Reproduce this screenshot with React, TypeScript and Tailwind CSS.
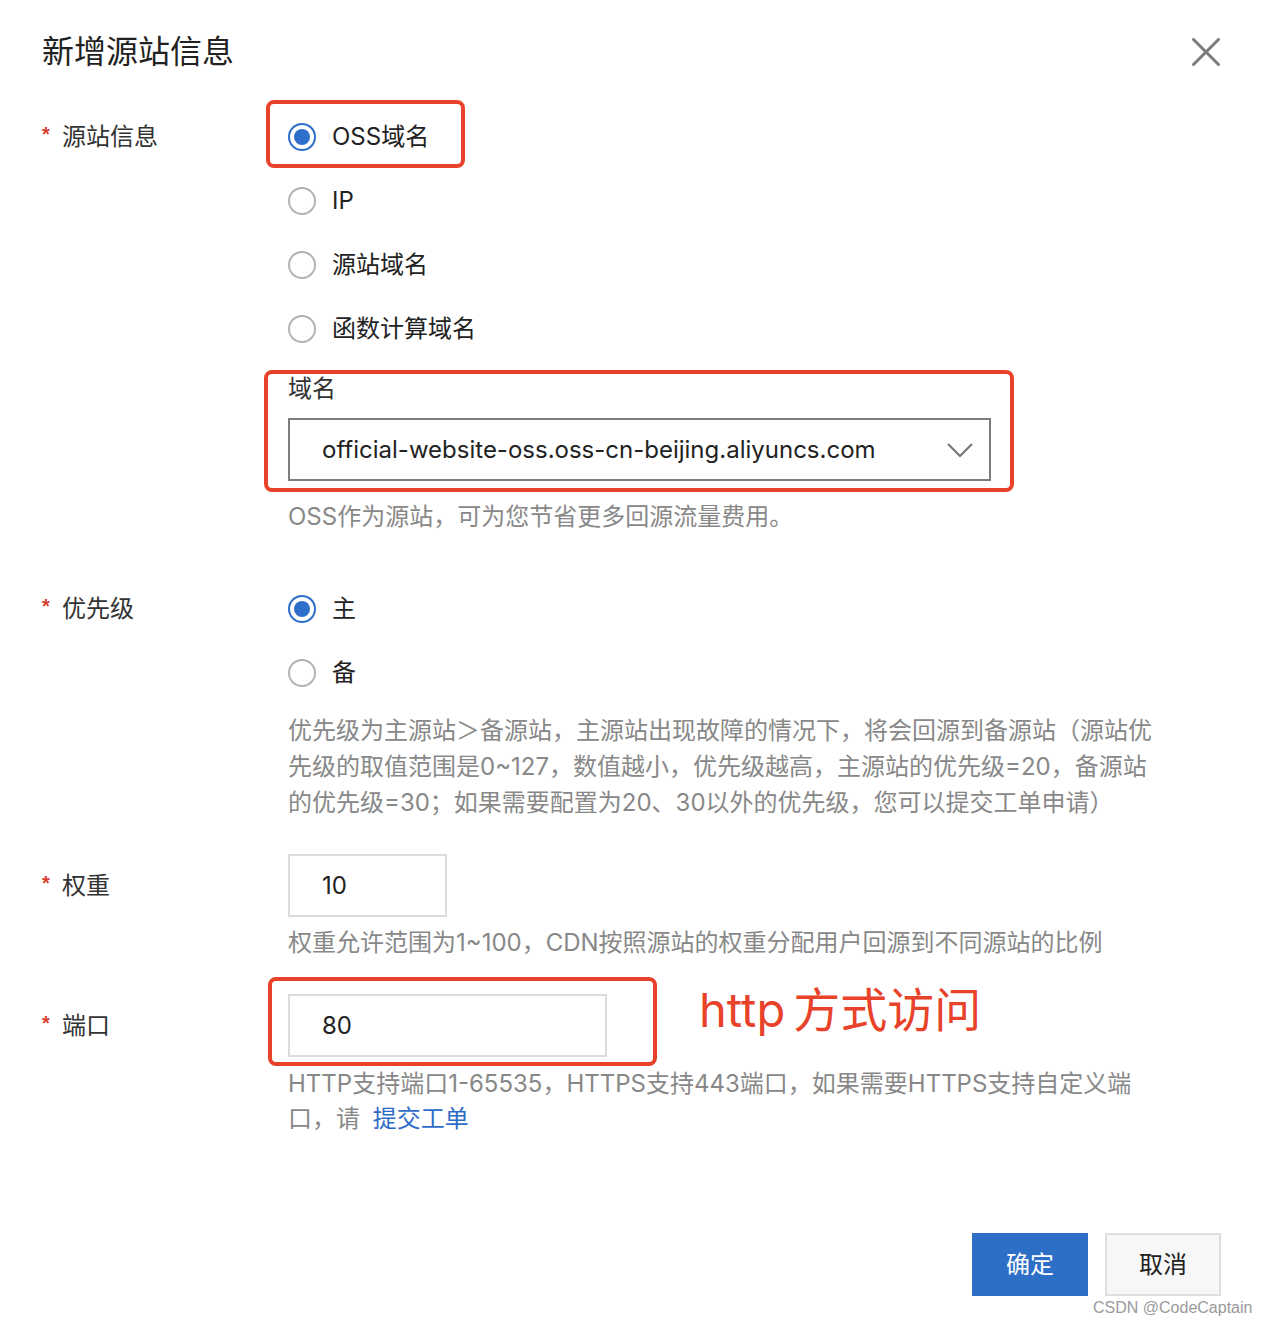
import React from "react";

const FONT = 'Inter, "Noto Sans CJK SC", sans-serif';

function Radio({ checked, label }: { checked?: boolean; label: string }) {
  return (
    <div className="flex items-center h-[64px]">
      {checked ? (
        <span className="w-[28px] h-[28px] rounded-full border-[2px] border-[#2e6fcc] flex items-center justify-center">
          <span className="w-[16px] h-[16px] rounded-full bg-[#2e6fcc]" />
        </span>
      ) : (
        <span className="w-[28px] h-[28px] rounded-full border-[2px] border-[#b3b3b3]" />
      )}
      <span className="ml-[16px] text-[24px] leading-[36px] text-[#222]">{label}</span>
    </div>
  );
}

function Label({ text, h }: { text: string; h: string }) {
  return (
    <div className={`w-[246px] shrink-0 flex items-center ${h}`}>
      <span className="text-[#d9402b] text-[20px] font-bold w-[20px] mt-[-6px]" style={{ fontFamily: '"Liberation Sans", sans-serif' }}>*</span>
      <span className="text-[24px] leading-[36px] text-[#333]">{text}</span>
    </div>
  );
}

export default function App() {
  return (
    <div className="w-[1264px] h-[1326px] bg-white relative" style={{ fontFamily: FONT }}>
      <div className="flex items-center justify-between pl-[42px] pr-[44px] h-[100px] pt-[3px]">
        <span className="text-[32px] leading-[44px] text-[#222]">新增源站信息</span>
        <svg width="28" height="28" viewBox="0 0 28 28" stroke="#7a7a7a" strokeWidth="3" strokeLinecap="round">
          <line x1="1.5" y1="1.5" x2="26.5" y2="26.5" />
          <line x1="26.5" y1="1.5" x2="1.5" y2="26.5" />
        </svg>
      </div>

      <div className="pl-[42px] pt-[5px]">
        {/* Row 1 */}
        <div className="flex">
          <Label text="源站信息" h="h-[64px]" />
          <div className="flex flex-col">
            <div className="relative">
              <div className="absolute left-[-22px] top-[-5px] w-[199px] h-[68px] border-[4px] border-[#e8432a] rounded-[8px]" />
              <Radio checked label="OSS域名" />
            </div>
            <Radio label="IP" />
            <Radio label="源站域名" />
            <Radio label="函数计算域名" />
            <div className="relative mt-[10px]">
              <div className="absolute left-[-24px] top-[-1px] w-[750px] h-[122px] border-[4px] border-[#e8432a] rounded-[8px]" />
              <div className="text-[24px] leading-[36px] text-[#333]">域名</div>
              <div className="mt-[11px] w-[703px] h-[63px] border-[2px] border-[#7d7d7d] flex items-center justify-between pl-[32px] pr-[16px]">
                <span className="text-[24px] leading-[36px] text-[#222]">official-website-oss.oss-cn-beijing.aliyuncs.com</span>
                <svg width="26" height="16" viewBox="0 0 26 16" fill="none" stroke="#777" strokeWidth="2.2">
                  <polyline points="1,2 13,14 25,2" />
                </svg>
              </div>
            </div>
            <div className="mt-[18px] text-[24px] leading-[36px] text-[#888]">OSS作为源站，可为您节省更多回源流量费用。</div>
          </div>
        </div>

        {/* Row 2 */}
        <div className="flex mt-[42px]">
          <Label text="优先级" h="h-[64px]" />
          <div className="flex flex-col">
            <Radio checked label="主" />
            <Radio label="备" />
            <div className="mt-[8px] text-[24px] leading-[36px] text-[#888] whitespace-nowrap">
              <div>优先级为主源站＞备源站，主源站出现故障的情况下，将会回源到备源站（源站优</div>
              <div>先级的取值范围是0~127，数值越小，优先级越高，主源站的优先级=20，备源站</div>
              <div>的优先级=30；如果需要配置为20、30以外的优先级，您可以提交工单申请）</div>
            </div>
          </div>
        </div>

        {/* Row 3 */}
        <div className="flex mt-[33px]">
          <Label text="权重" h="h-[63px]" />
          <div className="flex flex-col">
            <div className="w-[159px] h-[63px] border-[2px] border-[#dcdcdc] flex items-center pl-[32px] text-[24px] text-[#222]">10</div>
            <div className="mt-[8px] text-[24px] leading-[36px] text-[#888] whitespace-nowrap">权重允许范围为1~100，CDN按照源站的权重分配用户回源到不同源站的比例</div>
          </div>
        </div>

        {/* Row 4 */}
        <div className="flex mt-[33px]">
          <Label text="端口" h="h-[63px]" />
          <div className="flex flex-col">
            <div className="relative">
              <div className="absolute left-[-20px] top-[-17px] w-[389px] h-[89px] border-[4px] border-[#e8432a] rounded-[8px]" />
              <div className="absolute left-[411px] top-[-14px] text-[47px] leading-[60px] text-[#e8432a] whitespace-nowrap">
                http<span className="ml-[8px]">方式访问</span>
              </div>
              <div className="w-[319px] h-[63px] border-[2px] border-[#dcdcdc] flex items-center pl-[32px] text-[24px] text-[#222]">80</div>
            </div>
            <div className="mt-[9px] text-[24px] leading-[35px] text-[#888] whitespace-nowrap">
              <div>HTTP支持端口1-65535，HTTPS支持443端口，如果需要HTTPS支持自定义端</div>
              <div>
                口，请 <span className="ml-[6px] text-[#2d6cc6]">提交工单</span>
              </div>
            </div>
          </div>
        </div>
      </div>

      <div className="flex justify-end pr-[43px] mt-[97px] gap-[17px]">
        <div className="w-[116px] h-[63px] bg-[#2d6fc7] text-white text-[24px] flex items-center justify-center">确定</div>
        <div className="w-[116px] h-[63px] bg-[#f7f7f7] border-[2px] border-[#dedede] text-[#222] text-[24px] flex items-center justify-center">取消</div>
      </div>

      <div className="absolute left-[1093px] top-[1298px] text-[16px] leading-[20px] text-[#9a9a9a] whitespace-nowrap" style={{ fontFamily: '"Liberation Sans", sans-serif' }}>CSDN @CodeCaptain</div>
    </div>
  );
}
